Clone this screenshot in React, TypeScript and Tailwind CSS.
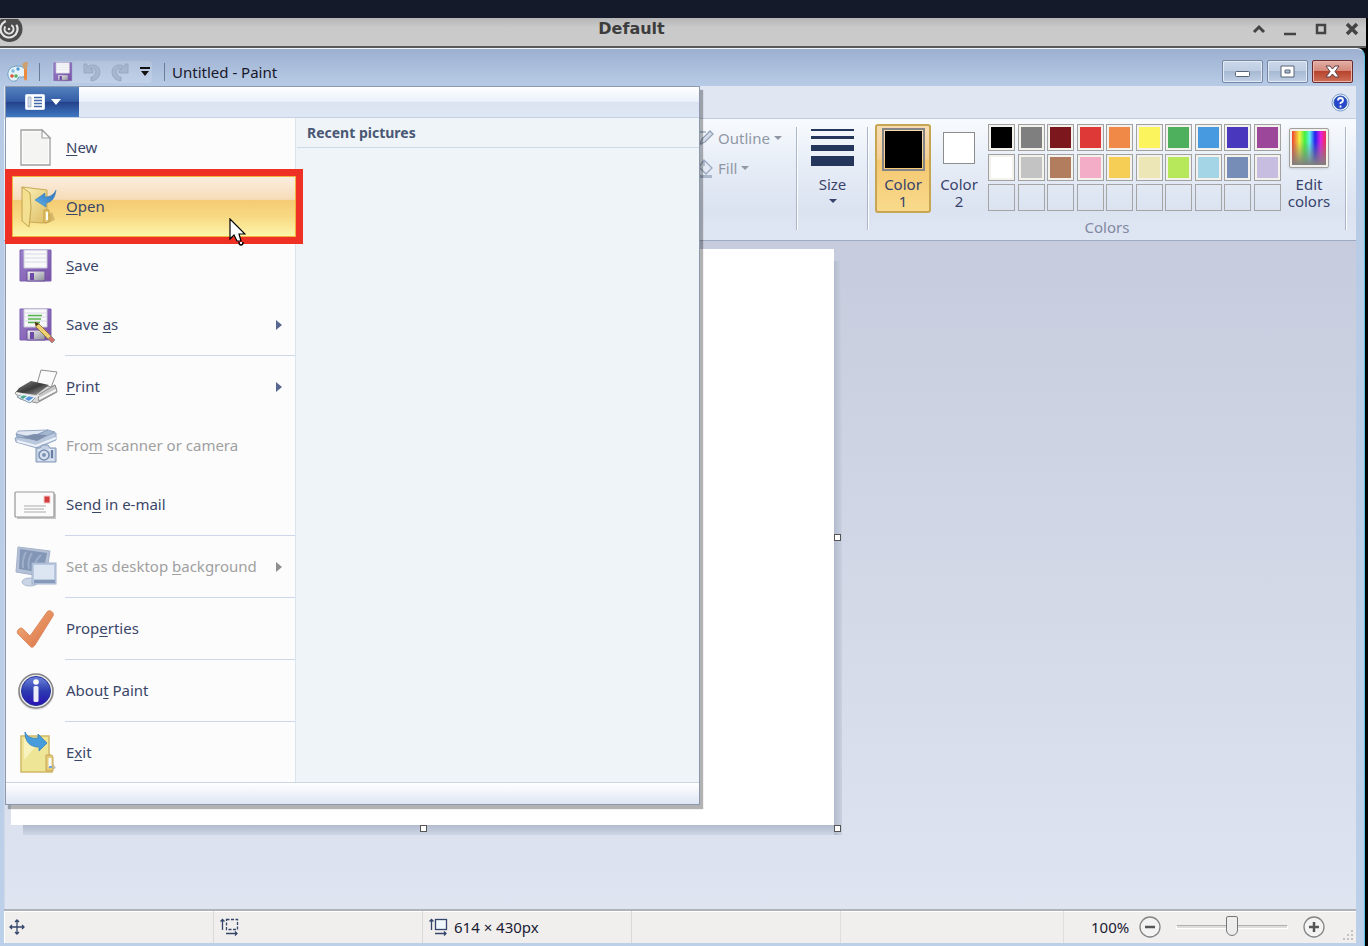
import React from "react";

type IconProps = { className?: string };

function Floppy({ className = "size-8", marked = false }: IconProps & { marked?: boolean }) {
  return (
    <svg viewBox="0 0 38 38" className={className} aria-hidden="true">
      <defs>
        <linearGradient id="flop" x1="0" x2="1" y1="0" y2="1">
          <stop offset="0" stopColor="#9a83cc" />
          <stop offset="1" stopColor="#7a4fa9" />
        </linearGradient>
        <linearGradient id="metal" x1="0" x2="1" y1="0" y2="1">
          <stop offset="0" stopColor="#f5f5f8" />
          <stop offset="1" stopColor="#8d8d98" />
        </linearGradient>
      </defs>
      <path d="M3 3h31v31H3z" fill="url(#flop)" stroke="#7a5fae" />
      <path d="M7 3h23v18H7z" fill="#f9f9fb" stroke="#c9c7d8" />
      <path d="M8 7h21M8 11h21M8 15h21" stroke="#d9dbe3" />
      <path d="M10 24h18v10H10z" fill="url(#metal)" stroke="#6c4fa0" />
      <path d="M13 26h4v7h-4z" fill="#6c4aa6" />
      {marked && (
        <>
          <path d="M11 9.500h14M11 13h13M11 16.500h12" stroke="#54b64a" strokeWidth="1.500" />
          <path d="M18 16l1 5 14 14 3-3-14-14z" fill="#edcf74" stroke="#8a6a2c" strokeWidth=".8" />
          <path d="M18 16l1 4 3-2z" fill="#3c2c1c" />
          <path d="M31 33l3-3 4 4-3 3z" fill="#d6706b" stroke="#888" strokeWidth=".8" />
        </>
      )}
    </svg>
  );
}

function NewIcon() {
  return (
    <svg viewBox="0 0 42 42" className="size-[42px]" aria-hidden="true">
      <path d="M6 3h21l8 8v27H6z" fill="#fbfbfa" stroke="#9f9f9f" strokeWidth="1.300" />
      <path d="M8 5h18v7h7v24H8z" fill="#f4f4f2" />
      <path d="M27 3v8h8z" fill="#fff" stroke="#9f9f9f" strokeWidth="1.200" />
    </svg>
  );
}

function OpenIcon() {
  return (
    <svg viewBox="0 0 42 42" className="size-[42px]" aria-hidden="true">
      <defs>
        <linearGradient id="fold" x1="0" x2="1" y1="0" y2="1">
          <stop offset="0" stopColor="#faf2bb" />
          <stop offset="1" stopColor="#dcb95d" />
        </linearGradient>
        <linearGradient id="arrow" x1="0" x2="1" y1="1" y2="0">
          <stop offset="0" stopColor="#62b3ec" />
          <stop offset="1" stopColor="#2a6db5" />
        </linearGradient>
      </defs>
      <path d="M30 38l10-4-3-8-9 6z" fill="#b79955" opacity=".5" />
      <path d="M7 1l25 3v23l4 3v5l-9 2-13-1z" fill="url(#fold)" stroke="#c9aa54" />
      <path d="M7 1l8 6 1 15-2 19-7-6z" fill="#f3e191" stroke="#c3a24b" />
      <path d="M29 24h5v12l-5 1z" fill="#e8c96b" stroke="#b99643" strokeWidth=".8" />
      <path d="M32 26v8" stroke="#fff" strokeWidth="2" />
      <path d="M20 14l10-7v4c6 0 9-3 11-7-1 8-4 12-10 13v4z" fill="url(#arrow)" stroke="#397fb9" strokeWidth=".6" />
    </svg>
  );
}

function PrintIcon() {
  return (
    <svg viewBox="0 0 44 38" className="h-[38px] w-11" aria-hidden="true">
      <defs>
        <linearGradient id="prn" x1="0" x2="1" y1="0" y2="1">
          <stop offset="0" stopColor="#888" />
          <stop offset=".5" stopColor="#3b3b3b" />
          <stop offset="1" stopColor="#b8b8b8" />
        </linearGradient>
      </defs>
      <path d="M23 16l4-14 16 2-7 18z" fill="#fbfbfb" stroke="#909090" />
      <path d="M1 25l16-11 7 2 13 3 4-2 2 7-20 11-17-4z" fill="#d7d7d7" stroke="#909090" />
      <path d="M5 20l12-7 18 4-13 10-20-3z" fill="url(#prn)" />
      <path d="M24 27l17-10 2 6-18 10z" fill="#c5c5c5" stroke="#8c8c8c" />
      <path d="M25 31l17-9" stroke="#f5f5f5" strokeWidth="2" />
      <path d="M3 29l5-3 14 3-6 6z" fill="#eaf4ff" stroke="#8d9ba8" />
      <path d="M6 29l4-2 3 1-4 3z" fill="#46aa8b" />
      <path d="M11 31l4-3 5 1-5 4z" fill="#5793dc" />
      <path d="M2 25l20 4 3-2" fill="none" stroke="#f1f1f1" strokeWidth="1.500" />
    </svg>
  );
}

function ScannerIcon() {
  return (
    <svg viewBox="0 0 44 38" className="h-[38px] w-11" aria-hidden="true">
      <path d="M1 11l18-4 23-1v7l-19 8-21-6z" fill="#bac8dd" stroke="#94a7c3" />
      <path d="M4 4l30-1-17 7-15-3z" fill="#e0e7f2" stroke="#99abc6" />
      <path d="M2 7l14 4 18-8 7 2-17 8-21-3z" fill="#a6b7d1" stroke="#8398b7" strokeWidth=".8" />
      <path d="M8 10l12-3 13 1-10 6z" fill="#7e8fac" />
      <path d="M3 14l19 5 20-8" fill="none" stroke="#edf2fb" strokeWidth="2" />
      <path d="M22 21h4l2-3h6l2 3h6v14H22z" fill="#c5d2e5" stroke="#8297b7" />
      <path d="M24 23h16M24 33h16" stroke="#eef3fb" />
      <circle cx="30" cy="28" r="5" fill="#d8e1f0" stroke="#788daf" strokeWidth="1.500" />
      <circle cx="30" cy="28" r="2" fill="#8095b5" />
      <path d="M38 23v8" stroke="#697ea1" strokeWidth="2" />
    </svg>
  );
}

function MailIcon() {
  return (
    <svg viewBox="0 0 44 38" className="h-[38px] w-11" aria-hidden="true">
      <path d="M3 32h38V8" fill="none" stroke="#c7c7c7" strokeWidth="2" />
      <rect x="1" y="6" width="39" height="25" rx="1" fill="#fbfbfb" stroke="#979797" strokeWidth="1.200" />
      <rect x="30" y="10" width="6" height="7" fill="#d33d3d" stroke="#f3c9c9" />
      <path d="M10 20h22M10 23h20M10 26h22" stroke="#ababab" strokeWidth="1.200" />
    </svg>
  );
}

function DesktopIcon() {
  return (
    <svg viewBox="0 0 44 42" className="h-[42px] w-11" aria-hidden="true">
      <ellipse cx="16" cy="36" rx="8" ry="4" fill="#c9d5e6" stroke="#acbad0" />
      <path d="M4 1l32 4-4 26L2 26z" fill="#b3c0d6" stroke="#a3b1ca" />
      <path d="M6 3l27 4-4 20L5 23z" fill="#8496b6" />
      <path d="M12 6Q8 13 9 22M18 7Q13 14 15 23M27 9Q20 15 20 24" fill="none" stroke="#9dafca" strokeWidth="2" />
      <rect x="18" y="17" width="24" height="21" fill="#b9c9df" stroke="#a1b2cc" />
      <rect x="20" y="19" width="20" height="14" fill="#dce5f2" />
      <path d="M20 35.500h21" stroke="#8799b8" strokeWidth="3" />
    </svg>
  );
}

function CheckIcon() {
  return (
    <svg viewBox="0 0 42 42" className="size-[42px]" aria-hidden="true">
      <defs>
        <linearGradient id="chk" x1="0" x2="1" y1="0" y2="1">
          <stop offset="0" stopColor="#f3b07c" />
          <stop offset="1" stopColor="#d96f43" />
        </linearGradient>
      </defs>
      <path d="M3 22c1-2 4-3 6 0l6 6L32 4c2-3 8 0 6 4L20 37c-2 3-4 3-6 0L3 26c-1-1-1-3 0-4z" fill="url(#chk)" stroke="#dc8c64" />
    </svg>
  );
}

function InfoIcon() {
  return (
    <svg viewBox="0 0 42 42" className="size-[42px]" aria-hidden="true">
      <defs>
        <linearGradient id="inf" x1="0" x2="0" y1="0" y2="1">
          <stop offset="0" stopColor="#6d86da" />
          <stop offset=".5" stopColor="#2c3bb0" />
          <stop offset="1" stopColor="#2a12b4" />
        </linearGradient>
      </defs>
      <circle cx="21" cy="22" r="18" fill="#c9c9c9" opacity=".6" />
      <circle cx="21" cy="21" r="17" fill="#e9e9e9" stroke="#858585" strokeWidth="1.500" />
      <circle cx="21" cy="21" r="14.500" fill="url(#inf)" stroke="#27349c" />
      <circle cx="21" cy="12" r="2.800" fill="#fff" />
      <rect x="18.500" y="16" width="5" height="16" rx="1.500" fill="#ecebfa" />
    </svg>
  );
}

function ExitIcon() {
  return (
    <svg viewBox="0 0 42 42" className="size-[42px]" aria-hidden="true">
      <path d="M32 40l9-4-3-4-6 4z" fill="#999" opacity=".6" />
      <path d="M6 4h28v18l3 4v14H6z" fill="#efe596" stroke="#cfb865" strokeWidth="1.500" />
      <path d="M9 7h18L9 28z" fill="#f8f3bd" />
      <path d="M31 23h5q2 0 2 3v13h-7z" fill="#e6cb79" stroke="#c3a758" />
      <path d="M35 26v9" stroke="#f6fbff" strokeWidth="3" />
      <path d="M34 35h3" stroke="#70a6e5" strokeWidth="2" />
      <path d="M10 0c2 5 7 7 13 6V2l9 9-8 8v-4c-9 0-14-5-14-15z" fill="#479ddb" stroke="#3380bd" strokeWidth=".8" />
    </svg>
  );
}

function PaletteIcon() {
  return (
    <svg viewBox="0 0 22 22" className="size-[22px]" aria-hidden="true">
      <path d="M1 15c-1-6 3-10 10-10 6 0 8 4 7 9-1 3-4 2-6 2-2 1-1 4-4 4-4 1-6-2-7-5z" fill="#e5f2f9" stroke="#6f9fc1" />
      <circle cx="5" cy="15" r="1.800" fill="#dc553b" />
      <circle cx="6" cy="10" r="1.700" fill="#7fb9dd" />
      <circle cx="11" cy="8" r="1.700" fill="#4f9ad6" />
      <circle cx="9" cy="15" r="1.800" fill="#58b15a" />
      <path d="M17 8h3v10l-1 2-2-2z" fill="#eb8b3f" />
      <path d="M17 8l-2-5 3-2h3l-1 7z" fill="#cda06d" />
    </svg>
  );
}

function UndoIcon({ className = "" }: IconProps) {
  return (
    <svg viewBox="0 0 20 20" className={"size-5 " + className} aria-hidden="true">
      <path d="M2 2v9h9V8l-3-1c4-2 7 1 5 5-1 2-2 3-4 3v4c5 0 9-4 9-9 0-7-8-9-13-5V2z" fill="#a8b6cd" stroke="#93a3bf" strokeWidth=".8" />
    </svg>
  );
}

function CanvasSizeIcon({ dashed = false }: { dashed?: boolean }) {
  return (
    <svg viewBox="0 0 19 18" className="h-[18px] w-[19px]" aria-hidden="true" fill="none" stroke="#35466b">
      <path d="M2.500 12V2M.5 3.500l2-2 2 2" strokeWidth="1.300" />
      <rect x="6.500" y="1.500" width="11" height="10" fill={dashed ? "none" : "#eef7fb"} strokeWidth="1.300" strokeDasharray={dashed ? "3 1.500" : undefined} />
      <path d="M6 15.500h11M15 13.500l2 2-2 2" strokeWidth="1.300" />
    </svg>
  );
}

const U = ({ children }: { children: React.ReactNode }) => (
  <u className="underline decoration-1 underline-offset-2">{children}</u>
);

type Item = {
  icon: React.ReactNode;
  label: React.ReactNode;
  submenu?: boolean;
  disabled?: boolean;
  active?: boolean;
  divided?: boolean;
};

const items: Item[] = [
  { icon: <NewIcon />, label: <><U>N</U>ew</> },
  { icon: <OpenIcon />, label: <><U>O</U>pen</>, active: true },
  { icon: <Floppy className="size-[38px]" />, label: <><U>S</U>ave</> },
  { icon: <Floppy className="size-[38px]" marked />, label: <>Save <U>a</U>s</>, submenu: true, divided: true },
  { icon: <PrintIcon />, label: <><U>P</U>rint</>, submenu: true },
  { icon: <ScannerIcon />, label: <>Fro<U>m</U> scanner or camera</>, disabled: true },
  { icon: <MailIcon />, label: <>Sen<U>d</U> in e-mail</>, divided: true },
  { icon: <DesktopIcon />, label: <>Set as desktop <U>b</U>ackground</>, submenu: true, disabled: true, divided: true },
  { icon: <CheckIcon />, label: <>Prop<U>e</U>rties</>, divided: true },
  { icon: <InfoIcon />, label: <>Abou<U>t</U> Paint</>, divided: true },
  { icon: <ExitIcon />, label: <>E<U>x</U>it</> },
];

function MenuItem({ item }: { item: Item }) {
  return (
    <li>
      <div className="relative">
        <button
          type="button"
          disabled={item.disabled}
          className={
            "flex h-[59px] w-full items-center pl-2 text-left " +
            (item.disabled ? "text-[#a0a0a0] " : "text-[#3a4668] ") +
            (item.active
              ? "bg-[linear-gradient(to_bottom,#fbeee0_0%,#f6dcb8_38%,#f4cb73_39%,#f8d983_68%,#fdf6ab_100%)]"
              : "")
          }
        >
          <span className="flex w-11 shrink-0 justify-center">{item.icon}</span>
          <span className="grow pl-2">{item.label}</span>
          {item.submenu && (
            <svg viewBox="0 0 6 10" className="mr-[13px] h-2.5 w-1.5" aria-hidden="true">
              <path d="M0 0l6 5-6 5z" fill={item.disabled ? "#8e8e8e" : "#56688f"} />
            </svg>
          )}
        </button>
        {item.active && (
          <div className="pointer-events-none absolute -top-2 -right-2 -bottom-2 left-[-1px] z-10 border-[7px] border-[#ee3124]">
            <div className="h-full border border-[#efb33d]" />
          </div>
        )}
        {item.active && (
          <svg viewBox="0 0 17 28" className="pointer-events-none absolute top-[41px] left-[223px] z-20 h-7 w-[17px]" aria-hidden="true">
            <path d="M1 1v20l4-4 3 6h4l-2-7h6z" fill="#fff" stroke="#000" strokeWidth="1.200" />
            <path d="M10 24q0 3 2 3t2-3" fill="#fff" stroke="#000" strokeWidth="1.500" />
          </svg>
        )}
      </div>
      {item.divided && <div className="my-px ml-[59px] h-px bg-[#ccd8ea]" />}
    </li>
  );
}

function FileMenu() {
  return (
    <div className="absolute top-[37px] left-[5px] z-10 w-[695px] border border-[#8c98ad] bg-[#fcfcfd] shadow-[3px_4px_1px_#0000004d]">
      <div className="flex h-[31px] border-b border-[#c4d1e2] bg-[linear-gradient(to_bottom,#ffffff,#eaf0fa_48%,#dbe3f1_50%,#dee7f5)]">
        <button
          type="button"
          aria-label="File menu"
          className="flex w-[73px] items-center justify-center gap-1.5 bg-[linear-gradient(to_bottom,#5480bd,#345da6_48%,#24418a_50%,#3f79c2)]"
        >
          <svg viewBox="0 0 20 16" className="h-4 w-5" aria-hidden="true">
            <rect x=".5" y=".5" width="19" height="15" rx="1" fill="#fff" stroke="#dbe6f6" />
            <path d="M3 3h3v10H3z" fill="#d5dfee" stroke="#8396b9" strokeWidth=".6" />
            <path d="M9 3.500h8M9 6.500h8M9 9.500h8M9 12.500h8" stroke="#426aa8" strokeWidth="1.500" />
          </svg>
          <svg viewBox="0 0 10 6" className="h-1.5 w-2.5" aria-hidden="true"><path d="M0 0h10L5 6z" fill="#fff" /></svg>
        </button>
      </div>
      <div className="flex">
        <ul className="w-[290px] shrink-0 border-r border-[#dbe3ed]">
          {items.map((item, i) => <MenuItem key={i} item={item} />)}
        </ul>
        <div className="grow bg-[#eff4f9] pl-px">
          <h2 className="border-b border-[#ced9e6] pt-[5px] pb-1 pl-2.5 text-[14px] leading-5 font-bold text-[#4a5874]">Recent pictures</h2>
        </div>
      </div>
      <div className="h-[22px] border-t border-[#cad6e4] bg-linear-to-b from-white to-[#dee6f4]" />
    </div>
  );
}

const palette: [string, string][] = [
  ["Black", "bg-[#000000]"], ["Gray", "bg-[#7f7f7f]"], ["Dark red", "bg-[#7d171e]"], ["Red", "bg-[#de3936]"], ["Orange", "bg-[#f08848]"],
  ["Yellow", "bg-[#fbf45c]"], ["Green", "bg-[#4eb05d]"], ["Turquoise", "bg-[#479adf]"], ["Indigo", "bg-[#4938bd]"], ["Purple", "bg-[#9c4799]"],
  ["White", "bg-[#ffffff]"], ["Light gray", "bg-[#c3c3c3]"], ["Brown", "bg-[#b27d5f]"], ["Rose", "bg-[#f4adc6]"], ["Gold", "bg-[#f6ce55]"],
  ["Light yellow", "bg-[#ece5b6]"], ["Lime", "bg-[#b7e75b]"], ["Light turquoise", "bg-[#a3d5e6]"], ["Blue gray", "bg-[#768db8]"], ["Lavender", "bg-[#c7bde0]"],
];

function Down({ className = "" }: IconProps) {
  return (
    <svg viewBox="0 0 8 4" className={"h-1 w-2 " + className} aria-hidden="true">
      <path d="M0 0h8L4 4z" fill="currentColor" />
    </svg>
  );
}

function Divider() {
  return <div className="my-1 w-[2px] shrink-0 border-l border-[#a9b6ca] bg-white" />;
}

function Ribbon() {
  return (
    <div className="flex h-[123px] items-stretch border-y border-t-[#c1cde0] border-b-[#9aabc3] bg-[linear-gradient(to_bottom,#f8fbfe,#e8eef7_35%,#dbe3f1_75%,#dfe6f3)] pt-1 pb-1.5 pl-[692px] leading-[17px] text-[#37436b]">
      <div className="flex w-[100px] shrink-0 flex-col items-start text-[#9098a5]">
        <button type="button" disabled className="flex h-[30px] items-center">
          <svg viewBox="0 0 18 18" className="size-[18px]" aria-hidden="true">
            <path d="M1 3h9M1 3v12h5" fill="none" stroke="#a4b1c5" strokeWidth="1.500" />
            <path d="M4 15l2-5 8-8 3 3-8 8z" fill="#d4ddea" stroke="#94a1b8" strokeWidth="1.300" />
          </svg>
          <span className="pl-1">Outline</span>
          <Down className="ml-1" />
        </button>
        <button type="button" disabled className="flex h-[30px] items-center">
          <svg viewBox="0 0 18 20" className="h-5 w-[18px]" aria-hidden="true">
            <path d="M1 17h15v3H1z" fill="#a9b6cc" />
            <path d="M8 2l8 8-6 6-7-7zM8 2v6M3 9l-2 5" fill="#e3eaf4" stroke="#9caac1" strokeWidth="1.300" />
          </svg>
          <span className="pl-1">Fill</span>
          <Down className="ml-1" />
        </button>
      </div>
      <Divider />
      <button type="button" className="flex w-[69px] shrink-0 flex-col items-center pt-1.5">
        <svg viewBox="0 0 43 37" className="h-[37px] w-[43px]" aria-hidden="true" fill="#24365c">
          <path d="M0 0h43v2H0zM0 7h43v3H0zM0 16h43v6H0zM0 27h43v10H0z" />
        </svg>
        <span className="mt-2.5">Size</span>
        <Down className="mt-1.5" />
      </button>
      <Divider />
      <section className="flex w-[476px] shrink-0 flex-col" aria-label="Colors">
        <div className="flex items-start px-1.5 pt-px">
          <button type="button" className="flex h-[89px] w-14 flex-col items-center rounded-[3px] border-2 border-[#c7a653] bg-[linear-gradient(to_bottom,#f6dcb3,#f5cf96_39%,#f5c771_40%,#f8da8c)] pt-0.5">
            <span className="flex size-[43px] border-2 border-[#858585] p-px"><span className="grow bg-black" /></span>
            <span className="mt-[5px] w-10">Color 1</span>
          </button>
          <button type="button" className="flex h-[89px] w-14 flex-col items-center pt-2">
            <span className="size-8 border border-[#8c8c8c] bg-white" />
            <span className="mt-3 w-10">Color 2</span>
          </button>
          <div className="ml-px grid h-[87px] w-[293px] grid-cols-[repeat(10,27px)] content-between justify-between">
            {palette.map(([name, color]) => (
              <button key={name} type="button" aria-label={name} className="size-[27px] border border-[#a1a1a1] bg-[#f3f2ec] p-0.5">
                <span className={"block h-full w-full " + color} />
              </button>
            ))}
            {Array.from({ length: 10 }, (_, i) => (
              <button key={i} type="button" aria-label={"Custom color " + (i + 1)} className="size-[27px] border border-[#a5a5a6]" />
            ))}
          </div>
          <button type="button" className="ml-1.5 flex w-11 flex-col items-center pt-1">
            <span className="flex size-10 rounded-xs border border-[#a0a0a0] bg-[#f2f0e8] p-0.5 shadow-sm">
              <span className="grow bg-[linear-gradient(to_bottom,#80808000_30%,#808080_100%),linear-gradient(to_right,#f04030,#f0f040_22%,#40f040_38%,#60f0f0_52%,#2020f0_68%,#e020e0_84%,#f03050)]" />
            </span>
            <span className="mt-2">Edit colors</span>
          </button>
        </div>
        <span className="mt-1.5 text-center text-[#8389a2]">Colors</span>
      </section>
      <Divider />
    </div>
  );
}

function Handle({ className }: { className: string }) {
  return <span className={"absolute size-[7px] border border-[#555] bg-white " + className} />;
}

export default function App() {
  return (
    <div className="flex min-h-screen flex-col bg-black font-['Noto_Sans','Open_Sans',sans-serif] text-[15px]">
      <div className="h-[18px] shrink-0 bg-[#141a29]" />
      <header className="mr-0.5 flex h-[30px] shrink-0 items-center justify-between border-b-2 border-[#595959] bg-linear-to-b from-[#b6b6b6] to-[#cacaca] to-35% pr-[7px]">
        <div className="flex w-[110px]">
          <svg viewBox="0 0 24 26" className="h-[26px] w-6" aria-hidden="true">
            <circle cx="9.500" cy="10" r="13" fill="#4c4c4c" />
            <circle cx="9" cy="10" r="8.500" fill="none" stroke="#e5e5e5" strokeWidth="2.200" strokeDasharray="41 12" transform="rotate(-30 9 10)" />
            <circle cx="9" cy="10" r="4.500" fill="none" stroke="#e5e5e5" strokeWidth="2" strokeDasharray="21 8" transform="rotate(-60 9 10)" />
            <circle cx="9" cy="10" r="1.300" fill="#e5e5e5" />
          </svg>
        </div>
        <h1 className="pr-24 pb-1.5 font-['DejaVu_Sans',sans-serif] text-[16px] leading-5 font-bold text-[#3d3d3d]">Default</h1>
        <div className="flex w-[110px] items-center justify-end gap-[17px] pb-1.5">
          <button type="button" aria-label="Shade"><svg viewBox="0 0 14 14" className="size-3.5"><path d="M2 10l5-5 5 5" fill="none" stroke="#444" strokeWidth="3" /></svg></button>
          <button type="button" aria-label="Minimize"><svg viewBox="0 0 14 14" className="size-3.5"><path d="M1 12h12" stroke="#444" strokeWidth="2.500" /></svg></button>
          <button type="button" aria-label="Maximize"><svg viewBox="0 0 14 14" className="size-3.5"><path d="M3 3h8v8H3z" fill="none" stroke="#444" strokeWidth="2.500" /></svg></button>
          <button type="button" aria-label="Close"><svg viewBox="0 0 14 14" className="size-3.5"><path d="M2 2l10 10M12 2L2 12" stroke="#444" strokeWidth="3.500" /></svg></button>
        </div>
      </header>

      <main className="relative mr-[3px] flex grow flex-col rounded-tr-lg border-t border-r border-t-[#f1f6fc] border-r-[#5dc5df] bg-[linear-gradient(to_bottom,#9db0d0,#b8cbe6_37px,#bdd0e9_100%)] pr-2 pb-[3px] pl-1">
        <div className="flex h-[37px] shrink-0 items-center">
          <div className="flex grow items-center pt-2">
            <span className="ml-[3px]"><PaletteIcon /></span>
            <span className="ml-2.5 h-[18px] w-px bg-[#6d7c96]" />
            <div className="ml-3 flex items-center gap-2 rounded-sm bg-[#ffffff26]">
              <button type="button" aria-label="Save"><Floppy className="size-[22px]" /></button>
              <button type="button" aria-label="Undo"><UndoIcon /></button>
              <button type="button" aria-label="Redo"><UndoIcon className="-scale-x-100" /></button>
              <button type="button" aria-label="Customize Quick Access Toolbar" className="px-0.5">
                <svg viewBox="0 0 10 9" className="h-[9px] w-2.5"><path d="M0 0h10v2H0zM1 4h8L5 9z" fill="#111" /></svg>
              </button>
            </div>
            <span className="ml-3 h-[18px] w-px bg-[#6d7c96]" />
            <h2 className="ml-[7px] leading-5 text-[#18182b]">Untitled - Paint</h2>
          </div>
          <div className="flex gap-1 pt-[7px] pr-[3px]">
            <button type="button" aria-label="Minimize" className="flex h-[23px] w-[41px] items-center justify-center rounded-xs border border-[#7587a4] bg-[linear-gradient(to_bottom,#ccd8ea,#bdcce1_48%,#a7b9d3_50%,#c0d0e5)] shadow-[inset_0_0_0_1px_#e1eaf5]">
              <svg viewBox="0 0 15 13" className="h-[13px] w-[15px]"><rect x=".5" y="6.500" width="14" height="5" rx="1" fill="#fff" stroke="#596475" /></svg>
            </button>
            <button type="button" aria-label="Maximize" className="flex h-[23px] w-[41px] items-center justify-center rounded-xs border border-[#7587a4] bg-[linear-gradient(to_bottom,#ccd8ea,#bdcce1_48%,#a7b9d3_50%,#c0d0e5)] shadow-[inset_0_0_0_1px_#e1eaf5]">
              <svg viewBox="0 0 15 13" className="h-[13px] w-[15px]"><path fillRule="evenodd" d="M1 1h13v11H1zM5 5v3h5V5z" fill="#fff" stroke="#596475" /></svg>
            </button>
            <button type="button" aria-label="Close" className="flex h-[23px] w-[41px] items-center justify-center rounded-xs border border-[#682c32] bg-[linear-gradient(to_bottom,#e2aea5,#d48b7c_45%,#b8432c_50%,#ce7059)] shadow-[inset_0_0_0_1px_#eeb6aa]">
              <svg viewBox="0 0 15 13" className="h-[13px] w-[15px]"><path d="M1 1h4l2.500 3L10 1h4l-4 5.500 4 5.500h-4L7.500 9 5 12H1l4-5.500z" fill="#fff" stroke="#5c3d48" /></svg>
            </button>
          </div>
        </div>
        <div className="flex h-8 shrink-0 items-center justify-end bg-[#e0e6f2] pr-1.5">
          <button type="button" aria-label="Help">
            <svg viewBox="0 0 19 19" className="size-[19px]">
              <circle cx="9.500" cy="9.500" r="8.500" fill="#edf5ff" stroke="#7b9dce" />
              <circle cx="9.500" cy="9.500" r="6.500" fill="#2748cc" stroke="#315dac" />
              <path d="M7 7.500Q7 5 9.500 5T12 7.500Q12 9 9.500 10v1M9.500 12.500v2" fill="none" stroke="#fff" strokeWidth="1.800" />
            </svg>
          </button>
        </div>
        <Ribbon />
        <div className="grow border-l border-[#ced8e8] bg-linear-to-b from-[#c6ccdd] to-[#dee4f0] pt-2 pb-[84px] pl-1.5">
          <div className="relative h-[576px] w-[823px] bg-white">
            <div className="absolute top-3 -right-2 -bottom-2.5 w-2 bg-linear-to-r from-[#b1bbcd] to-[#c9d1e0]" />
            <div className="absolute right-0 -bottom-2.5 left-3 h-2.5 bg-linear-to-b from-[#b1bbcd] to-[#ced6e4]" />
            <Handle className="top-[285px] -right-[7px]" />
            <Handle className="-right-[7px] -bottom-[7px]" />
            <Handle className="-bottom-[7px] left-[409px]" />
          </div>
        </div>
        <footer className="flex h-[34px] shrink-0 items-stretch border-t-2 border-[#afb3ba] bg-[#f0efee] text-[#202033] shadow-[inset_1px_1px_0_#ffffff]">
          <div className="flex w-[210px] items-center border-r border-[#d9d9da] pl-[5px]">
            <svg viewBox="0 0 16 16" className="size-4" aria-hidden="true"><path d="M8 1v14M1 8h14M6 3l2-2 2 2M6 13l2 2 2-2M3 6L1 8l2 2M13 6l2 2-2 2" fill="none" stroke="#35466b" strokeWidth="1.300" /></svg>
          </div>
          <div className="flex w-[209px] items-center border-r border-[#d9d9da] pl-1.5"><CanvasSizeIcon dashed /></div>
          <div className="flex w-[209px] items-center gap-1.5 border-r border-[#d9d9da] pl-1.5"><CanvasSizeIcon />614 × 430px</div>
          <div className="w-[209px] border-r border-[#dfdfdf]" />
          <div className="grow border-r border-[#dfdfdf]" />
          <div className="relative flex w-[292px] items-center pl-[27px]">
            <label htmlFor="zoom" className="w-12">100%</label>
            <button type="button" aria-label="Zoom out">
              <svg viewBox="0 0 22 22" className="size-[22px]"><circle cx="11" cy="11" r="10" fill="#f3f3f3" stroke="#858585" strokeWidth="1.300" /><path d="M6 11h10" stroke="#555" strokeWidth="2.500" /></svg>
            </button>
            <input
              id="zoom"
              type="range"
              defaultValue={50}
              className="mx-[15px] h-6 w-[112px] appearance-none bg-transparent [&::-webkit-slider-runnable-track]:h-1 [&::-webkit-slider-runnable-track]:border [&::-webkit-slider-runnable-track]:border-[#ffffff] [&::-webkit-slider-runnable-track]:border-t-[#b0b0b0] [&::-webkit-slider-runnable-track]:bg-[#dddddd] [&::-webkit-slider-thumb]:-mt-[10px] [&::-webkit-slider-thumb]:h-5 [&::-webkit-slider-thumb]:w-3 [&::-webkit-slider-thumb]:appearance-none [&::-webkit-slider-thumb]:rounded-t-xs [&::-webkit-slider-thumb]:rounded-b-md [&::-webkit-slider-thumb]:border [&::-webkit-slider-thumb]:border-[#777777] [&::-webkit-slider-thumb]:bg-[#ededed]"
            />
            <button type="button" aria-label="Zoom in">
              <svg viewBox="0 0 22 22" className="size-[22px]"><circle cx="11" cy="11" r="10" fill="#f3f3f3" stroke="#858585" strokeWidth="1.300" /><path d="M6 11h10M11 6v10" stroke="#555" strokeWidth="2.500" /></svg>
            </button>
            <svg viewBox="0 0 11 11" className="absolute right-0.5 bottom-0.5 size-[11px]" aria-hidden="true"><path d="M8 0h2v2H8zM4 4h2v2H4zM8 4h2v2H8zM0 8h2v2H0zM4 8h2v2H4zM8 8h2v2H8z" fill="#c2c2c2" /></svg>
          </div>
        </footer>
        <FileMenu />
      </main>
    </div>
  );
}
